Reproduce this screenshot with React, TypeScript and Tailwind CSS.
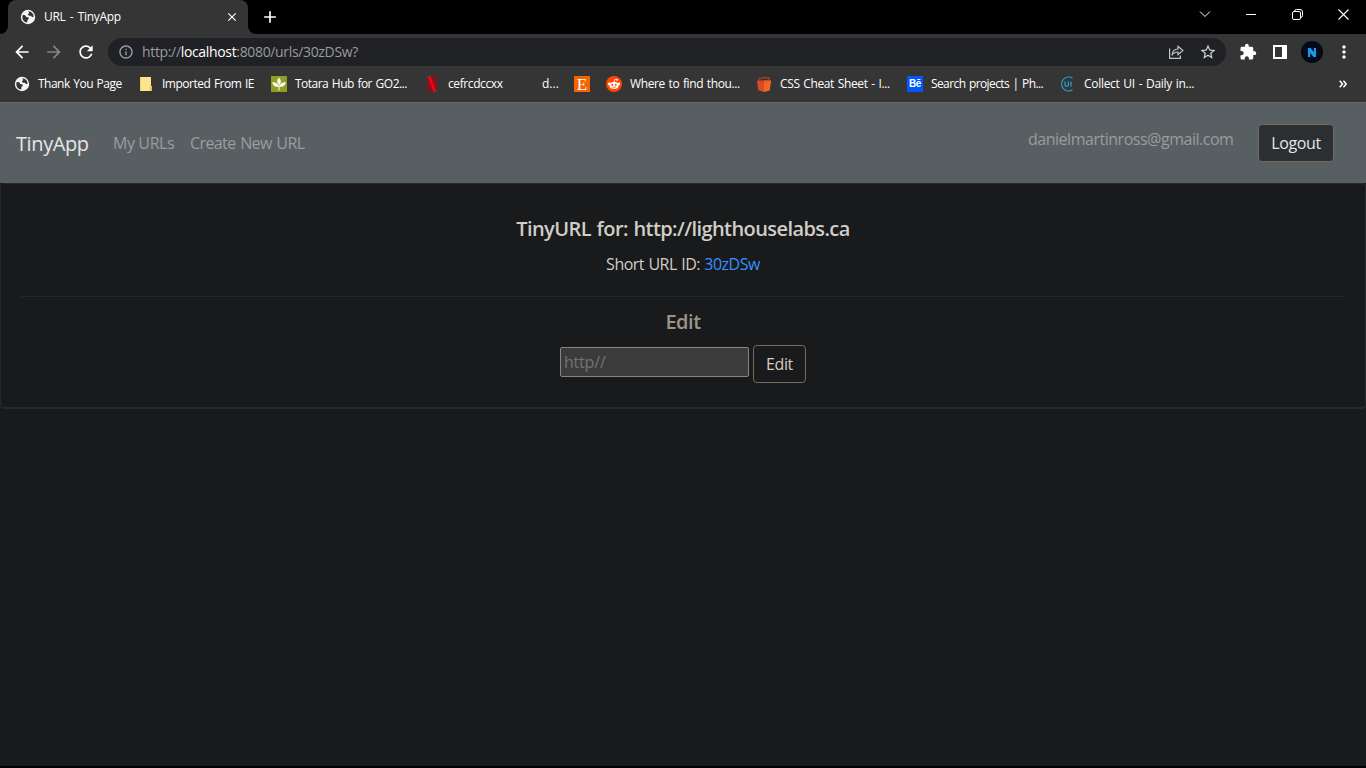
import React from "react";
import { MdExtension, MdArrowBack, MdArrowForward, MdRefresh, MdStarBorder, MdMoreVert, MdClose, MdAdd, MdInfoOutline } from "react-icons/md";

function Globe() {
  return (
    <svg width="16" height="16" viewBox="0 0 16 16" className="shrink-0">
      <circle cx="8" cy="8" r="7.2" fill="#f4f5f6" />
      <path d="M2.6 6.2c1.6-.3 2.8.2 3.4 1.2.5.8 1.5.6 2.4 1 .7.4.5 1.4-.2 1.8-.7.4-.8 1.1-.8 2l-.3 1.3C4 13.300 2.400 11 2.300 8.200z" fill="#353535" />
      <path d="M8.300 2.300c2.300 0 4.100 1.400 4.900 3.200l.4 2.300c-1 .6-1.800.2-2.300-.6-.5-.7-1.300-.3-2.200-.5-.9-.2-1.500-.9-1-1.600.5-.7 1.200-.6 1-1.300-.1-.6-.7-.8-.8-1.500z" fill="#353535" />
    </svg>
  );
}

function Note() {
  return (
    <svg width="16" height="16" viewBox="0 0 16 16">
      <path d="M2 1h11v9h1v5H2z" fill="#fde38d" />
      <path d="M12 10.500h2V15h-2z" fill="#e6bd55" />
      <path d="M2 1h.8v14H2z" fill="#efcf6d" />
    </svg>
  );
}

function Totara() {
  return (
    <svg width="16" height="16" viewBox="0 0 16 16">
      <rect width="16" height="16" rx=".5" fill="#8f9f24" />
      <path d="M8 1.500c2.500 2.700 2.500 5.300 0 7.800-2.500-2.500-2.500-5.100 0-7.800zM1.200 6.200C4.500 6 6.800 7.300 7.500 10.400 4.300 11.300 2 9.800 1.200 6.200zM14.800 6.200C11.500 6 9.200 7.300 8.500 10.400c3.200.9 5.500-.6 6.300-4.200zM7.500 9h1v5.500h-1z" fill="#fff" />
    </svg>
  );
}

function Netflix() {
  return (
    <svg width="16" height="16" viewBox="0 0 16 16">
      <path d="M3.700 0h3v16l-3 .1zM9.300 0h3v16h-3z" fill="#a80710" />
      <path d="M3.700 0h3l5.600 16h-3z" fill="#e50914" />
    </svg>
  );
}

function Etsy() {
  return (
    <div className="flex size-4 items-center justify-center bg-[#f56400] font-['Liberation_Serif',serif] text-[17px] leading-none font-normal text-white">E</div>
  );
}

function Reddit() {
  return (
    <svg width="16" height="16" viewBox="0 0 16 16">
      <circle cx="8" cy="8" r="8" fill="#ff4500" />
      <ellipse cx="8" cy="9.400" rx="4.600" ry="3.400" fill="#fff" />
      <circle cx="3.300" cy="7.900" r="1.300" fill="#fff" />
      <circle cx="12.700" cy="7.900" r="1.300" fill="#fff" />
      <circle cx="11" cy="3.700" r="1" fill="#fff" />
      <path d="M8 6.500l.7-3.100 2.200.4" fill="none" stroke="#fff" strokeWidth=".8" />
      <circle cx="6.200" cy="8.700" r="1" fill="#ff4500" />
      <circle cx="9.800" cy="8.700" r="1" fill="#ff4500" />
      <path d="M6 10.800q2 1.300 4 0" fill="none" stroke="#ff4500" strokeWidth=".7" />
    </svg>
  );
}

function Basket() {
  return (
    <svg width="16" height="16" viewBox="0 0 16 16">
      <path d="M1 4.500h14l-1.300 9.700L8 16l-5.700-1.800z" fill="#dd4b25" />
      <path d="M8 4.500h7l-1.300 9.700L8 16z" fill="#ef652a" />
      <path d="M3 4.300l.4-2.200 1.400 1 .8-2 1.200 1.500L8 1l1.200 1.600L10.600.7l.6 2 2-1.400-.5 3" fill="none" stroke="#c9441f" strokeWidth=".9" />
      <path d="M5 5v1.500M8 5v1.500M11 5v1.500" stroke="#c1401d" strokeWidth=".8" />
    </svg>
  );
}

function Behance() {
  return (
    <div className="flex size-4 items-center justify-center bg-[#0057ff] font-['Liberation_Sans',sans-serif] text-[10px] leading-none font-bold tracking-[-0.3px] text-white">Bē</div>
  );
}

function CollectUI() {
  return (
    <svg width="16" height="16" viewBox="0 0 16 16">
      <path d="M12.500 2.200A7 7 0 1 0 12.500 13.800" fill="none" stroke="#2b9dc9" strokeWidth="1.100" />
      <path d="M5 5.500v3.300c0 2 3.400 2 3.400 0V5.500M11 5.500v5" fill="none" stroke="#2ba6d5" strokeWidth="1.200" />
    </svg>
  );
}

function Bookmark({ icon, label, slot, tracking }: { icon?: React.ReactNode; label?: string; slot: string; tracking?: string }) {
  return (
    <div className={`flex shrink-0 items-center gap-2 ${slot}`}>
      {icon && <div className="size-4 shrink-0">{icon}</div>}
      {label && <span className={`whitespace-nowrap ${tracking ?? ""}`}>{label}</span>}
    </div>
  );
}

function Browser() {
  return (
    <header className="bg-[#353535] font-['Open_Sans','Noto_Sans',sans-serif] text-[12px] text-white">
      <div className="flex h-[34px] items-stretch bg-black">
        <div className="flex w-2 items-end bg-[#353535]"><div className="h-full w-2 rounded-br-lg bg-black" /></div>
        <div className="flex w-[240px] items-center rounded-t-lg bg-[#353535] pl-3">
          <Globe />
          <span className="ml-2 flex-1 tracking-[-0.3px] whitespace-nowrap [word-spacing:1.5px]">URL - TinyApp</span>
          <MdClose size={14} className="mr-[9px]" />
        </div>
        <div className="w-2 bg-[#353535]"><div className="h-full rounded-bl-lg bg-black" /></div>
        <div className="flex w-7 items-center justify-center"><MdAdd size={20} /></div>
        <div className="ml-auto flex items-center">
          <div className="flex w-[46px] justify-center pb-[6px]"><svg width="12" height="8" viewBox="0 0 12 8"><path d="M1 1.500l5 5 5-5" fill="none" stroke="#fff" strokeWidth="1" /></svg></div>
          <div className="flex w-[46px] justify-center pb-[6px]"><svg width="10" height="4" viewBox="0 0 10 4"><path d="M0 2.500h10" stroke="#fff" /></svg></div>
          <div className="flex w-[46px] justify-center pb-[6px]"><svg width="11" height="11" viewBox="0 0 11 11" fill="none" stroke="#fff"><rect x=".5" y="2.500" width="8" height="8" rx="1.500" /><path d="M2.500 2.200Q2.500.5 4.500.5H8q2.500 0 2.500 2.500v3.500q0 2-1.700 2" /></svg></div>
          <div className="flex w-[46px] justify-center pb-[6px]"><svg width="11" height="11" viewBox="0 0 11 11"><path d="M.5.5l10 10M10.500.5l-10 10" stroke="#fff" strokeWidth="1.100" /></svg></div>
        </div>
      </div>
      <div className="flex h-9 items-center pl-3">
        <MdArrowBack size={20} />
        <MdArrowForward size={20} className="ml-3 text-[#878787]" />
        <MdRefresh size={20} className="ml-3" />
        <div className="ml-3 flex h-7 w-[1118px] items-center rounded-full bg-[#202124] pr-[9px] pl-[10px] text-[14px] text-[#9a9b9d]">
          <MdInfoOutline size={16} className="text-[#9aa0a6]" />
          <span className="ml-2 flex-1 pb-[2px] tracking-[-0.34px] whitespace-nowrap">http://<span className="text-white">localhost</span>:8080/urls/30zDSw?</span>
          <svg width="16" height="16" viewBox="0 0 16 16" fill="none" stroke="#c4c5c7" strokeWidth="1.200" className="mr-[15px]">
            <path d="M1.600 4.500v9.900h10.800v-3" />
            <path d="M4 11.200C4.300 7.200 6.500 5.200 10 5V2.200l4.900 4.300L10 10.800V8C7.200 8 5.400 9 4 11.200z" />
          </svg>
          <MdStarBorder size={18} className="text-[#d0d1d3]" />
        </div>
        <MdExtension size={18} className="ml-[13px]" />
        <svg width="14" height="14" viewBox="0 0 14 14" className="ml-4"><path d="M0 0h14v14H0zM2 2v10h7V2z" fill="#fff" fillRule="evenodd" /></svg>
        <div className="ml-[14px] flex size-[22px] items-center justify-center rounded-full bg-[#020a18]">
          <svg width="8" height="9" viewBox="0 0 8 9"><path d="M0 0h2.500L5.800 4V0H8v9H5.500L2.200 5v4H0z" fill="#139bea" /></svg>
        </div>
        <MdMoreVert size={20} className="ml-[11px]" />
      </div>
      <div className="flex h-8 items-center pb-1 pl-[14px]">
        <Bookmark icon={<Globe />} label="Thank You Page" slot="w-[124px]" tracking="tracking-[-0.52px] [word-spacing:1px]" />
        <Bookmark icon={<Note />} label="Imported From IE" slot="w-[133px]" tracking="tracking-[-0.5px] [word-spacing:1px]" />
        <Bookmark icon={<Totara />} label="Totara Hub for GO2..." slot="w-[153px]" tracking="tracking-[-0.52px] [word-spacing:1px]" />
        <Bookmark icon={<Netflix />} label="cefrcdccxx" slot="w-[118px]" tracking="tracking-[-0.4px]" />
        <Bookmark label="d..." slot="w-8" />
        <Bookmark icon={<Etsy />} slot="w-8" />
        <Bookmark icon={<Reddit />} label="Where to find thou..." slot="w-[150px]" tracking="tracking-[-0.4px] [word-spacing:1px]" />
        <Bookmark icon={<Basket />} label="CSS Cheat Sheet - I..." slot="w-[151px]" tracking="tracking-[-0.38px] [word-spacing:1px]" />
        <Bookmark icon={<Behance />} label="Search projects | Ph..." slot="w-[153px]" tracking="tracking-[-0.6px] [word-spacing:1px]" />
        <Bookmark icon={<CollectUI />} label="Collect UI - Daily in..." slot="w-[200px]" tracking="tracking-[-0.3px] [word-spacing:1px]" />
        <svg width="8" height="8" viewBox="0 0 8 8" className="mr-[19px] ml-auto"><path d="M.7.8L3.500 4 .7 7.200M4.400.8L7.200 4 4.400 7.200" fill="none" stroke="#fff" strokeWidth="1.500" /></svg>
      </div>
    </header>
  );
}

export default function App() {
  return (
    <div className="flex h-screen w-full flex-col overflow-hidden bg-[#181a1b] font-['Open_Sans','Noto_Sans',sans-serif]">
      <Browser />
      <nav className="flex h-[81px] shrink-0 items-center border-t border-[#636767] bg-[#585f62] px-4 text-[16px] text-[#9b9c9b]">
        <a className="w-[97px] pt-[2px] text-[20px] tracking-[-0.4px] whitespace-nowrap text-[#e8e6e3]">TinyApp</a>
        <a className="w-[77px] tracking-[-0.4px] whitespace-nowrap">My URLs</a>
        <a className="tracking-[-0.6px] whitespace-nowrap [word-spacing:1px]">Create New URL</a>
        <span className="ml-auto w-[230px] pb-2 tracking-[-0.48px] whitespace-nowrap">danielmartinross@gmail.com</span>
        <button className="mr-4 h-[38px] w-[76px] rounded-[4px] border border-[#736b5e] bg-[#2b2f31] tracking-[-0.4px] text-[#e8e6e3]">Logout</button>
      </nav>
      <main className="flex h-[226px] shrink-0 flex-col items-center rounded-[4px] border border-b-2 border-[#27292a] px-5 pt-[33px] text-[16px] text-[#d1cdc7]">
        <h5 className="h-6 text-[20px] leading-6 font-semibold tracking-[-0.58px] whitespace-nowrap [word-spacing:1px]">TinyURL for: http://lighthouselabs.ca</h5>
        <p className="mt-[11px] h-6 leading-6 tracking-[-0.5px] whitespace-nowrap [word-spacing:0.7px]">Short URL ID: <a className="text-[#3391ff]">30zDSw</a></p>
        <hr className="mt-5 w-full border-[#252728]" />
        <h5 className="mt-[13px] h-6 text-[20px] leading-6 font-semibold tracking-[-0.5px] text-[#9d9488]">Edit</h5>
        <div className="mt-[11px] flex items-start gap-1">
          <input placeholder="http//" className="mt-[2px] h-[30px] w-[189px] rounded-[2px] border border-[#858585] bg-[#3b3b3b] px-[3px] tracking-[-0.2px] placeholder:text-[#757370]" />
          <button className="h-[38px] w-[53px] rounded-[4px] border border-[#736b5e] tracking-[-0.4px]">Edit</button>
        </div>
      </main>
      <div className="mt-auto h-[2px] shrink-0 bg-black" />
    </div>
  );
}
